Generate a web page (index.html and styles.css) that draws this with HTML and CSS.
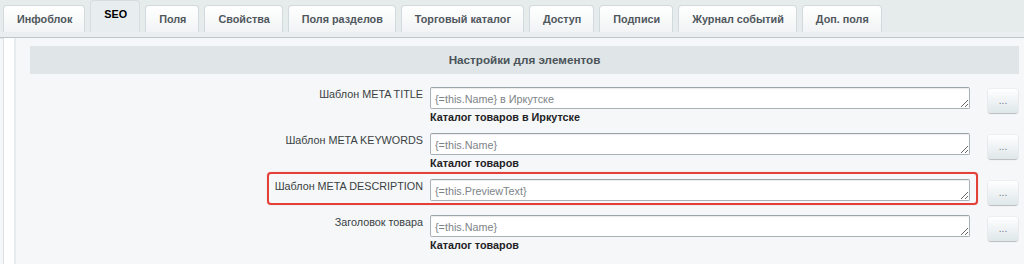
FILE: index.html
```html
<!DOCTYPE html>
<html lang="ru">
<head>
<meta charset="utf-8">
<title>SEO</title>
<link rel="stylesheet" href="styles.css">
</head>
<body>
<div class="tabs">
  <div class="tab">Инфоблок</div>
  <div class="tab active">SEO</div>
  <div class="tab">Поля</div>
  <div class="tab">Свойства</div>
  <div class="tab">Поля разделов</div>
  <div class="tab">Торговый каталог</div>
  <div class="tab">Доступ</div>
  <div class="tab">Подписи</div>
  <div class="tab">Журнал событий</div>
  <div class="tab">Доп. поля</div>
</div>
<div class="tabline"></div>
<div class="body">
  <div class="strip"></div>
  <div class="content">
    <div class="heading">Настройки для элементов</div>
    <div class="rows">
      <div class="row">
        <div class="lbl">Шаблон META TITLE</div>
        <div class="field">
          <textarea class="input">{=this.Name} в Иркутске</textarea>
          <div class="note">Каталог товаров в Иркутске</div>
        </div>
        <button class="btn">...</button>
      </div>
      <div class="row">
        <div class="lbl">Шаблон META KEYWORDS</div>
        <div class="field">
          <textarea class="input">{=this.Name}</textarea>
          <div class="note">Каталог товаров</div>
        </div>
        <button class="btn">...</button>
      </div>
      <div class="row marked">
        <div class="lbl">Шаблон META DESCRIPTION</div>
        <div class="field">
          <textarea class="input">{=this.PreviewText}</textarea>
        </div>
        <button class="btn">...</button>
      </div>
      <div class="row">
        <div class="lbl">Заголовок товара</div>
        <div class="field">
          <textarea class="input">{=this.Name}</textarea>
          <div class="note">Каталог товаров</div>
        </div>
        <button class="btn">...</button>
      </div>
    </div>
  </div>
</div>
</body>
</html>
```

FILE: styles.css
```css
html, body {
  margin: 0;
  padding: 0;
}
body {
  font-family: "Liberation Sans", Arial, sans-serif;
  font-size: 10.8px;
  color: #333;
  background: #f5f7f8;
  width: 1024px;
  height: 264px;
  overflow: hidden;
}
.tabs {
  display: flex;
  align-items: flex-end;
  gap: 5px;
  height: 32px;
  padding-left: 3px;
  background: #e6ebec;
}
.tab {
  height: 27px;
  box-sizing: border-box;
  padding: 0 12px 0 13px;
  display: flex;
  align-items: center;
  border: 1px solid #d3dadd;
  border-bottom: none;
  border-radius: 4px 4px 0 0;
  background: linear-gradient(#ffffff, #f1f3f4);
  font-weight: bold;
  font-size: 10.8px;
  color: #4f575d;
}
.tab.active {
  height: 32px;
  padding-bottom: 5px;
  background: #e8edef;
  border-color: #d6dde0;
  color: #000;
}
.tabline {
  height: 5px;
  background: #eaeef0;
  border-bottom: 1px solid #bcc5c9;
  box-shadow: 0 1px 1px rgba(0,0,0,0.06);
}
.body {
  display: flex;
  height: 226px;
}
.strip {
  width: 10px;
  margin-left: 3px;
  background: #fff;
  border-left: 1px solid #dde3e5;
  border-right: 2px solid #e6ebed;
  flex-shrink: 0;
}
.content {
  flex: 1;
  padding: 8px 5px 0 14px;
  background: #f5f7f8;
}
.heading {
  height: 28px;
  line-height: 28px;
  text-align: center;
  background: #e0e6e8;
  font-weight: bold;
  color: #4b5358;
  font-size: 11.7px;
}
.rows {
  display: flex;
  flex-direction: column;
  padding-top: 13px;
}
.row {
  display: grid;
  grid-template-columns: 393px 540px 30px;
  column-gap: 7px;
  padding-bottom: 9px;
  position: relative;
}
.lbl {
  text-align: right;
  line-height: 14px;
  color: #3a3f43;
  font-size: 10.8px;
}
.field {
  min-height: 27px;
  display: flex;
  flex-direction: column;
}
.input {
  display: block;
  width: 540px;
  height: 22px;
  box-sizing: border-box;
  margin: 0;
  padding: 4px 5px 0 4px;
  border: 1px solid #a8b1b6;
  border-top-color: #9ba4a9;
  border-radius: 2px;
  background: #fff;
  box-shadow: inset 0 1px 1px rgba(0,0,0,0.08);
  font-family: "Liberation Sans", Arial, sans-serif;
  font-size: 10.8px;
  line-height: 14px;
  color: #7d8387;
  overflow: hidden;
  resize: vertical;
}
.note {
  margin-top: 1px;
  line-height: 14px;
  font-weight: bold;
  color: #1f2326;
  font-size: 10.8px;
}
.btn {
  margin: 2px 0 0 11px;
  width: 30px;
  height: 24px;
  padding: 0 0 1px;
  border: none;
  border-radius: 3px;
  background: linear-gradient(#ffffff, #dfe7ea);
  box-shadow: 0 1px 1px rgba(0,0,0,0.22), 0 0 0 1px rgba(0,0,0,0.03);
  font-family: "Liberation Sans", Arial, sans-serif;
  font-size: 10px;
  color: #6d767c;
  letter-spacing: 0;
}
.row.marked::before {
  content: "";
  position: absolute;
  top: -7px;
  left: 237px;
  width: 711px;
  height: 33px;
  box-sizing: border-box;
  border: 2px solid #e53f3a;
  border-radius: 4px;
  box-shadow: 0 0 1px rgba(229,63,58,0.5);
  pointer-events: none;
}
```
